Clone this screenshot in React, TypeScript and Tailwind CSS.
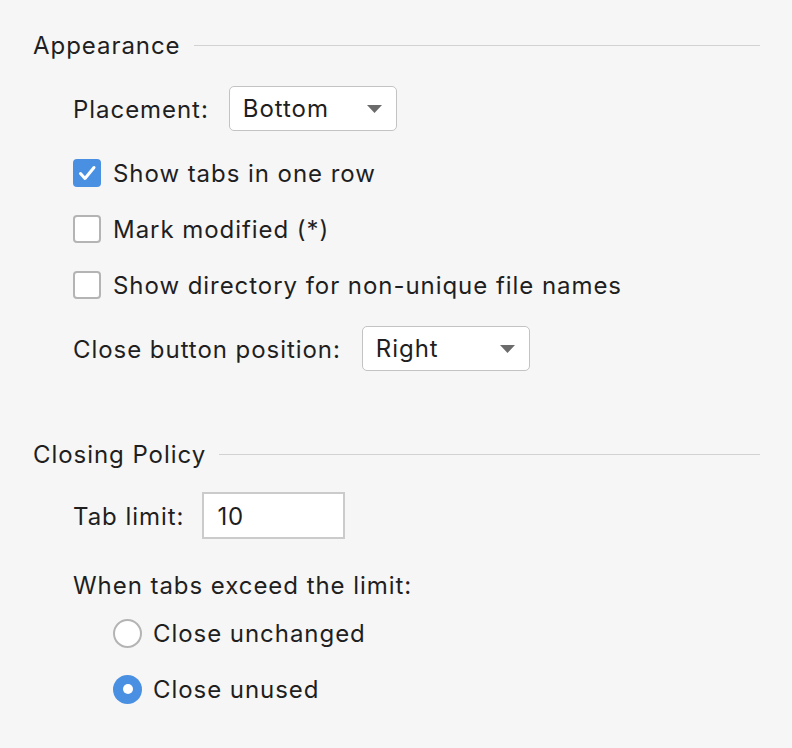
import React, { useState } from 'react';

const font = { fontFamily: 'Inter, "Noto Sans", sans-serif' };

const Heading: React.FC<{ title: string }> = ({ title }) => (
  <div className="flex h-[34px] items-center">
    <span className="pt-[1px]">{title}</span>
    <div className="ml-[13px] h-px flex-1 bg-[#d2d2d2]" />
  </div>
);

const Arrow = () => (
  <svg width="15" height="8" viewBox="0 0 15 8" className="shrink-0">
    <path d="M0 0 L15 0 L7.5 8 Z" fill="#6b6b6b" />
  </svg>
);

const Select: React.FC<{ value: string }> = ({ value }) => (
  <div className="flex h-[45px] w-[168px] items-center justify-between rounded-[5px] border border-[#c3c3c3] bg-white pl-[13px] pr-[14px]">
    <span>{value}</span>
    <Arrow />
  </div>
);

const Checkbox: React.FC<{ checked: boolean; label: string; onToggle: () => void }> = ({ checked, label, onToggle }) => (
  <div className="flex h-[56px] cursor-default items-center" onClick={onToggle}>
    {checked ? (
      <div className="h-[28px] w-[28px] rounded-[4px] bg-[#4a90e2]">
        <svg width="28" height="28" viewBox="0 0 28 28">
          <path d="M7.5 14.5 L12 19.5 L21 8.5" stroke="white" strokeWidth="3" fill="none" strokeLinecap="round" strokeLinejoin="round" />
        </svg>
      </div>
    ) : (
      <div className="h-[28px] w-[28px] rounded-[4px] border-2 border-[#b4b4b4] bg-white" />
    )}
    <span className="ml-[12px] pt-[2px]">{label}</span>
  </div>
);

const Radio: React.FC<{ checked: boolean; label: string; onSelect: () => void }> = ({ checked, label, onSelect }) => (
  <div className="flex h-[56px] cursor-default items-center" onClick={onSelect}>
    {checked ? (
      <div className="flex h-[29px] w-[29px] items-center justify-center rounded-full bg-[#4a90e2]">
        <div className="h-[10px] w-[10px] rounded-full bg-white" />
      </div>
    ) : (
      <div className="h-[29px] w-[29px] rounded-full border-2 border-[#b4b4b4] bg-white" />
    )}
    <span className="ml-[11px] pt-[2px]">{label}</span>
  </div>
);

export default function App() {
  const [oneRow, setOneRow] = useState(true);
  const [modified, setModified] = useState(false);
  const [showDir, setShowDir] = useState(false);
  const [policy, setPolicy] = useState<'unchanged' | 'unused'>('unused');

  return (
    <div
      className="min-h-[748px] w-[792px] bg-[#f6f6f6] pl-[33px] pr-[32px] pt-[28px] text-[24px] tracking-[0.95px] text-[#1f1f1f]"
      style={font}
    >
      <Heading title="Appearance" />
      <div className="pl-[40px]">
        <div className="mt-[24px] flex items-center">
          <span className="pt-[2px]">Placement:</span>
          <div className="ml-[20px]">
            <Select value="Bottom" />
          </div>
        </div>
        <div className="mt-[14px]">
          <Checkbox checked={oneRow} label="Show tabs in one row" onToggle={() => setOneRow(!oneRow)} />
          <Checkbox checked={modified} label="Mark modified (*)" onToggle={() => setModified(!modified)} />
          <Checkbox checked={showDir} label="Show directory for non-unique file names" onToggle={() => setShowDir(!showDir)} />
        </div>
        <div className="mt-[13px] flex items-center">
          <span className="pt-[2px]">Close button position:</span>
          <div className="ml-[21px]">
            <Select value="Right" />
          </div>
        </div>
      </div>

      <div className="mt-[66px]">
        <Heading title="Closing Policy" />
      </div>
      <div className="pl-[40px]">
        <div className="mt-[21px] flex items-center">
          <span className="pt-[2px]">Tab limit:</span>
          <input
            className="ml-[18px] h-[47px] w-[143px] border-2 border-[#cbcbcb] bg-white pl-[13px] pt-[2px] outline-none"
            defaultValue="10"
          />
        </div>
        <div className="mt-[29px] flex h-[34px] items-center pt-[2px]">When tabs exceed the limit:</div>
        <div className="mt-[3px] pl-[40px]">
          <Radio checked={policy === 'unchanged'} label="Close unchanged" onSelect={() => setPolicy('unchanged')} />
          <Radio checked={policy === 'unused'} label="Close unused" onSelect={() => setPolicy('unused')} />
        </div>
      </div>
    </div>
  );
}
